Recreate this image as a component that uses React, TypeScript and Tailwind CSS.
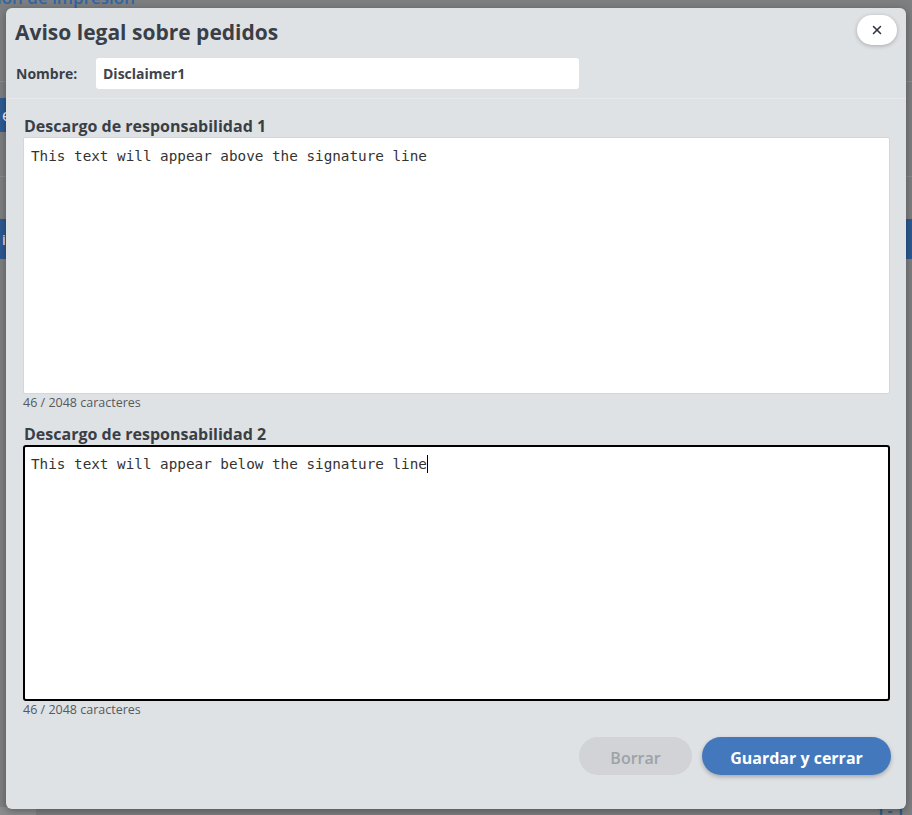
import { X } from 'lucide-react';

const LIMIT = 2048;

const disclaimers = [
  { label: 'Descargo de responsabilidad 1', text: 'This text will appear above the signature line', active: false },
  { label: 'Descargo de responsabilidad 2', text: 'This text will appear below the signature line', active: true },
];

function PageBehind() {
  return (
    <div className="relative w-full h-[815px] overflow-hidden bg-[#7e7f81] font-['Open_Sans',sans-serif]">
      {/* page title, mostly hidden by the dialog */}
      <div className="-mt-[13px] -ml-[3px] text-[17px] leading-[22px] font-semibold text-[#2f64a6]">
        ión de impresión
      </div>
      <div className="mt-[72px] h-px bg-[#8d8e90]" />
      {/* toolbar */}
      <div className="mt-[16px] w-[220px] h-[34px] bg-[#2d5c94] text-white text-[16px] leading-[34px] pl-[2px]">
        e
      </div>
      <div className="mt-[44px] h-px bg-[#8a8b8d]" />
      {/* grid header */}
      <div className="mt-[42px] h-[40px] bg-[#2d5a92] text-white text-[15px] leading-[40px] pl-[2px]">i</div>
      <div className="absolute left-0 bottom-0 w-[36px] h-[8px] bg-[#8c8d8f]" />
      <div className="absolute right-[8px] bottom-[-6px] text-[#2d5a92] text-[14px] font-bold">1 - 1</div>
    </div>
  );
}

function DisclaimerField({ label, text, active }: { label: string; text: string; active: boolean }) {
  return (
    <div className="flex flex-col">
      <div className="pl-[1px] text-[16px] leading-[21px] font-bold text-[#3a3f46]">{label}</div>
      <div
        className={
          active
            ? 'h-[256px] bg-white border-2 border-black rounded-[3px] px-[6px] pt-[4px]'
            : 'h-[257px] bg-white border border-[#d3d6da] rounded-[2px] px-[7px] pt-[5px]'
        }
      >
        <span className="font-['DejaVu_Sans_Mono',monospace] text-[14.3px] leading-[20px] text-[#333] whitespace-pre-wrap">
          {text}
        </span>
        {active && <span className="inline-block align-[-4px] w-px h-[18px] bg-black" />}
      </div>
      <div className="mt-px text-[12.5px] leading-[16px] text-[#555a60]">
        {text.length} / {LIMIT} caracteres
      </div>
    </div>
  );
}

export default function App() {
  return (
    <div className="relative">
      <PageBehind />
      {/* dialog */}
      <div className="absolute left-[6px] top-[8px] w-[900px] h-[801px] rounded-[6px] bg-[#dfe2e5] shadow-[0_2px_8px_rgba(0,0,0,0.35)] flex flex-col font-['Open_Sans',sans-serif] text-[#3a3f46]">
        <div className="relative px-[9px] pt-[10px] pb-[9px] border-b border-[#e7e9ec]">
          <h2 className="text-[21px] leading-[28px] font-bold text-[#3a3f47]">Aviso legal sobre pedidos</h2>
          <div className="mt-[12px] flex items-center">
            <span className="w-[81px] pl-px text-[14px] font-bold">Nombre:</span>
            <div className="w-[483px] h-[31px] bg-white rounded-[3px] px-[7px] flex items-center text-[14px] font-bold text-[#3f444b]">
              Disclaimer1
            </div>
          </div>
          <button className="absolute right-[9px] top-[7px] w-[40px] h-[30px] rounded-full bg-white shadow-[0_1px_4px_rgba(0,0,0,0.25)] flex items-center justify-center text-[#2f343b]">
            <X size={14} strokeWidth={2.6} />
          </button>
        </div>

        <div className="flex flex-col pl-[17px] pr-[16px] pt-[17px]">
          <div className="flex flex-col gap-[13px]">
            {disclaimers.map(d => (
              <DisclaimerField key={d.label} {...d} />
            ))}
          </div>
          <div className="mt-[19px] -mr-px flex justify-end gap-[10px]">
            <button className="w-[113px] h-[38px] pt-[3px] rounded-full bg-[#d1d3d6] text-[#9ea2a7] text-[16px] font-semibold">
              Borrar
            </button>
            <button className="w-[189px] h-[38px] pt-[3px] rounded-full bg-[#4478bd] text-white text-[16px] font-bold shadow-[0_2px_4px_rgba(0,0,0,0.25)]">
              Guardar y cerrar
            </button>
          </div>
        </div>
      </div>
    </div>
  );
}
